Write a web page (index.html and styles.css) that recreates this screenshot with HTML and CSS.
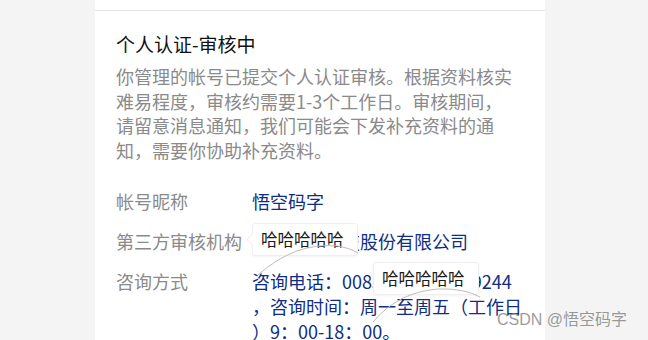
FILE: index.html
```html
<!DOCTYPE html>
<html lang="zh-CN">
<head>
    <meta charset="UTF-8">
    <meta name="viewport" content="width=device-width, initial-scale=1.0">
    <title>个人认证-审核中</title>
    <link rel="stylesheet" href="styles.css">
</head>
<body>
    <div class="panel">
        <div class="panel-top"></div>
        <div class="panel-body">
            <h2 class="title">个人认证-审核中</h2>
            <p class="desc">你管理的帐号已提交个人认证审核。根据资料核实难易程度，审核约需要1-3个工作日。审核期间，请留意消息通知，我们可能会下发补充资料的通知，需要你协助补充资料。</p>

            <div class="info">
                <div class="row">
                    <div class="label">帐号昵称</div>
                    <div class="value">悟空码字</div>
                </div>
                <div class="row">
                    <div class="label">第三方审核机构</div>
                    <div class="value">北京悟空科技股份有限公司</div>
                </div>
                <div class="row">
                    <div class="label">咨询方式</div>
                    <div class="value">咨询电话：00852123456789244，咨询时间：周一至周五（工作日）9：00-18：00。</div>
                </div>
            </div>
        </div>
    </div>

    <!-- hover notes left over on the page -->
    <div class="tip tip-1">哈哈哈哈哈</div>
    <div class="tip tip-2">哈哈哈哈哈</div>
    <svg class="tip-lines" width="648" height="340" viewBox="0 0 648 340">
        <path d="M258 275 Q295 242 337 246 Q350 248 358 253" />
        <path d="M373 322 Q398 292 438 289 Q464 288 480 297" />
    </svg>

    <div class="watermark">CSDN @悟空码字</div>
</body>
</html>
```

FILE: styles.css
```css
body{
     margin: 0;
     background-color: #f4f4f4;
     font-family: "Noto Sans CJK SC", "Noto Sans", sans-serif;
     height: 340px;
     overflow: hidden;
}
.panel{
     margin-left: 95px;
     width: 450px;
     background: #fff;
     min-height: 340px;
}
.panel-top{
     height: 10px;
}
.panel-body{
     border-top: 1px solid #e6e6e6;
     padding: 20px 21px 0 21px;
}
.title{
     margin: 0;
     font-size: 19px;
     font-weight: normal;
     line-height: 25px;
     color: #111;
}
.desc{
     margin: 8px 0 0 0;
     max-width: 400px;
     font-size: 18px;
     line-height: 24.5px;
     color: #8a8a8a;
}
.info{
     margin-top: 27px;
     display: flex;
     flex-direction: column;
     gap: 15px;
}
.row{
     display: flex;
     font-size: 18px;
     line-height: 25px;
}
.label{
     width: 136px;
     flex-shrink: 0;
     color: #8a8a8a;
}
.value{
     flex: 1;
     color: #0e2d84;
     line-break: anywhere;
     word-break: break-all;
}

.tip{
     position: absolute;
     width: 106px;
     height: 33px;
     box-sizing: border-box;
     padding-left: 8px;
     background: #fff;
     border: 1px solid #efefef;
     border-radius: 3px;
     box-shadow: 0 1px 3px rgba(0,0,0,0.05);
     font-size: 16.5px;
     line-height: 31px;
     color: #1a1a1a;
}
.tip-1{
     left: 252px;
     top: 223px;
}
.tip-1::before{ /*small arrow on the left side*/
     content: "";
     position: absolute;
     left: -5px;
     top: 11px;
     width: 8px;
     height: 8px;
     background: #fff;
     border-left: 1px solid #efefef;
     border-bottom: 1px solid #efefef;
     transform: rotate(45deg);
}
.tip-2{
     left: 373px;
     top: 262px;
}
.tip-lines{
     position: absolute;
     left: 0;
     top: 0;
     pointer-events: none;
}
.tip-lines path{
     fill: none;
     stroke: #bdbdbd;
     stroke-width: 1;
}
.watermark{
     position: absolute;
     left: 497px;
     top: 310px;
     font-family: "Liberation Sans", "Noto Sans CJK SC", sans-serif;
     font-size: 16px;
     line-height: 20px;
     color: rgba(120,120,120,0.75);
}
```
